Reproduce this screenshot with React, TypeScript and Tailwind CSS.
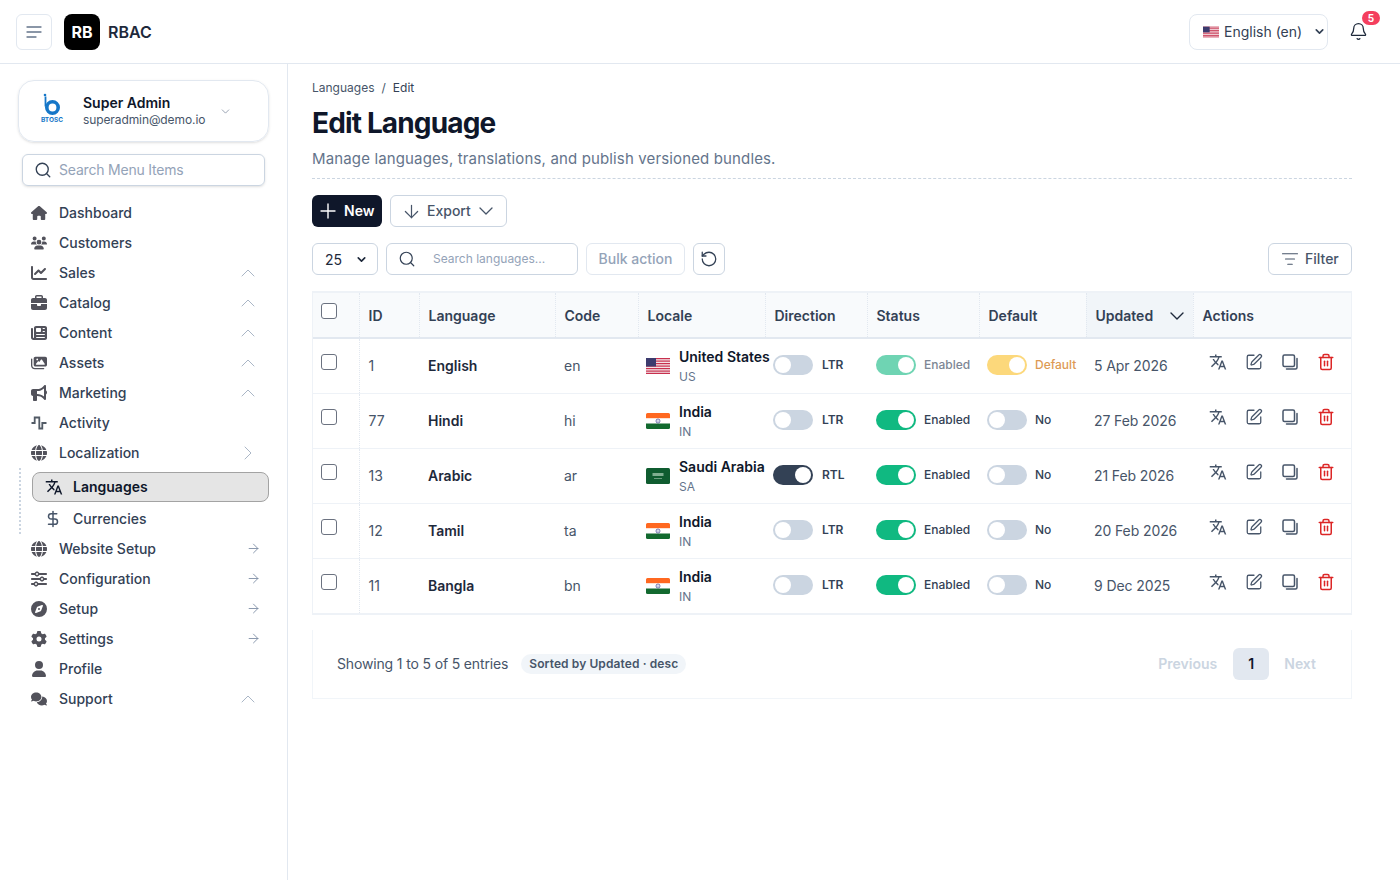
import type { ReactNode } from 'react'
import { ChevronDown, ChevronRight, ChevronUp, ArrowRight, ArrowDown, Bell, Search, Plus, RotateCcw, ListFilter, DollarSign, SquarePen, Trash2 } from 'lucide-react'
import { FaHouse, FaUsers, FaChartLine, FaBriefcase, FaNewspaper, FaImages, FaBullhorn, FaGlobe, FaSliders, FaCompass, FaGear, FaUser, FaComments } from 'react-icons/fa6'
import { MdTranslate } from 'react-icons/md'

const ActivityIcon = () => (
  <svg width="16" height="16" viewBox="0 0 16 16" fill="none" stroke="#525b66" strokeWidth="1.8">
    <path d="M0.5 8h3.2V2.5h4.6v11h3V8h4.2" />
  </svg>
)

const CopyIcon = () => (
  <svg width="18" height="18" viewBox="0 0 18 18" fill="none" stroke="#475569" strokeWidth="1.5" strokeLinecap="round" strokeLinejoin="round">
    <rect x="2" y="2" width="11.5" height="11.5" rx="1.5" />
    <path d="M16 5.5v9a1.5 1.5 0 0 1-1.5 1.5h-9" />
  </svg>
)

const UsFlag = ({ w = 24, h = 16 }: { w?: number; h?: number }) => (
  <svg width={w} height={h} viewBox="0 0 24 16" className="shrink-0">
    <rect width="24" height="16" fill="#f3e3e6" />
    {[0, 2.5, 5, 7.5, 10, 12.5, 14.8].map((y) => (
      <rect key={y} y={y} width="24" height="1.2" fill="#c8304e" />
    ))}
    <rect width="10" height="8.5" fill="#3c3b6e" />
  </svg>
)

const InFlag = () => (
  <svg width="24" height="16" viewBox="0 0 24 16" className="shrink-0">
    <path d="M0 1.5A1.5 1.5 0 0 1 1.5 0h21A1.5 1.5 0 0 1 24 1.5v3.9H0z" fill="#ff6820" />
    <rect y="5.4" width="24" height="5.2" fill="#fff" />
    <path d="M0 10.6h24v3.9a1.5 1.5 0 0 1-1.5 1.5h-21A1.5 1.5 0 0 1 0 14.5z" fill="#12692f" />
    <circle cx="12" cy="8" r="2" fill="none" stroke="#3b3f91" strokeWidth="0.7" />
    <circle cx="12" cy="8" r="0.6" fill="#3b3f91" />
  </svg>
)

const SaFlag = () => (
  <svg width="24" height="16" viewBox="0 0 24 16" className="shrink-0">
    <rect width="24" height="16" rx="1.5" fill="#0f5c30" />
    <rect x="6.5" y="5" width="11" height="3" fill="#7fae90" />
    <rect x="8" y="10" width="8" height="0.6" fill="#a9c9b5" />
  </svg>
)

const Logo = () => (
  <div className="w-[44px] flex flex-col items-center mb-1.5">
    <svg width="20" height="22" viewBox="0 0 20 22" fill="none">
      <circle cx="3" cy="2" r="1.3" fill="#1677c8" />
      <path d="M3.5 3.5v10" stroke="#1677c8" strokeWidth="1.8" />
      <circle cx="10.5" cy="14.5" r="5.7" stroke="#1677c8" strokeWidth="3.6" />
    </svg>
    <span className="text-[6.5px] leading-[6px] font-bold text-[#1677c8] mt-0.5">BTOSC</span>
  </div>
)

type NavProps = { icon: ReactNode; label: string; trail?: 'up' | 'right' | 'arrow' }

const NavItem = ({ icon, label, trail }: NavProps) => (
  <div className="h-[30px] flex items-center pl-[13px] pr-[9px]">
    <span className="w-4 h-4 flex items-center justify-center text-[#52525b] shrink-0">{icon}</span>
    <span className="ml-3 text-sm font-medium text-[#334155] flex-1">{label}</span>
    {trail === 'up' && <ChevronUp size={24} strokeWidth={0.8} className="text-[#94a3b8]" />}
    {trail === 'right' && <ChevronRight size={24} strokeWidth={0.8} className="text-[#94a3b8]" />}
    {trail === 'arrow' && (
      <span className="w-6 flex justify-end -mr-px -mt-[2px]">
        <ArrowRight size={15} strokeWidth={1.4} className="text-[#7c8ba3]" />
      </span>
    )}
  </div>
)

const Sidebar = () => (
  <aside className="w-[288px] shrink-0 border-r border-[#e2e8f0] bg-white pt-4 pl-[18px] pr-[18px]">
    <div className="h-[62px] border border-[#e2e8f0] rounded-2xl shadow-sm flex items-center pl-[11px]">
      <Logo />
      <div className="ml-[9px] flex-1">
        <div className="text-sm leading-[18px] font-semibold text-[#0f172a]">Super Admin</div>
        <div className="text-xs leading-[16px] tracking-[-0.1px] text-[#475569]">superadmin@demo.io</div>
      </div>
      <ChevronDown size={13} strokeWidth={1.2} className="text-[#64748b] mr-9" />
    </div>
    <div className="mx-1 mt-3 h-8 border border-[#cbd5e1] rounded-md flex items-center pl-[11px] shadow-sm">
      <Search size={18} strokeWidth={1.8} className="text-[#334155]" />
      <span className="ml-[7px] text-sm tracking-[-0.2px] text-[#94a3b8]">Search Menu Items</span>
    </div>
    <nav className="mt-3">
      <NavItem icon={<FaHouse size={16} />} label="Dashboard" />
      <NavItem icon={<FaUsers size={16} />} label="Customers" />
      <NavItem icon={<FaChartLine size={16} />} label="Sales" trail="up" />
      <NavItem icon={<FaBriefcase size={16} />} label="Catalog" trail="up" />
      <NavItem icon={<FaNewspaper size={16} />} label="Content" trail="up" />
      <NavItem icon={<FaImages size={16} />} label="Assets" trail="up" />
      <NavItem icon={<FaBullhorn size={16} />} label="Marketing" trail="up" />
      <NavItem icon={<ActivityIcon />} label="Activity" />
      <NavItem icon={<FaGlobe size={16} />} label="Localization" trail="right" />
      <div className="pt-1 border-l-2 border-dotted border-[#cbd5e1] ml-px pl-[11px]">
        <div className="h-[30px] flex items-center bg-[#e5e5e5] border border-[#a3a3a3] rounded-lg pl-3">
          <MdTranslate size={18} className="text-[#0f172a]" />
          <span className="ml-[10px] text-sm font-semibold text-[#0f172a]">Languages</span>
        </div>
        <div className="h-[30px] mt-0.5 flex items-center pl-3">
          <DollarSign size={18} strokeWidth={2} className="text-[#475569]" />
          <span className="ml-[11px] text-sm font-medium text-[#334155]">Currencies</span>
        </div>
      </div>
      <NavItem icon={<FaGlobe size={16} />} label="Website Setup" trail="arrow" />
      <NavItem icon={<FaSliders size={16} />} label="Configuration" trail="arrow" />
      <NavItem icon={<FaCompass size={16} />} label="Setup" trail="arrow" />
      <NavItem icon={<FaGear size={16} />} label="Settings" trail="arrow" />
      <NavItem icon={<FaUser size={16} />} label="Profile" />
      <NavItem icon={<FaComments size={16} />} label="Support" trail="up" />
    </nav>
  </aside>
)

const Toggle = ({ on, color, faded }: { on?: boolean; color?: string; faded?: boolean }) => (
  <span className={`w-10 h-5 rounded-full flex items-center px-0.5 shrink-0 ${color ?? 'bg-[#cbd5e1]'} ${on ? 'justify-end' : 'justify-start'} ${faded ? 'opacity-60' : ''}`}>
    <span className="w-4 h-4 rounded-full bg-white" />
  </span>
)

const Actions = () => (
  <div className="flex items-center pl-4 gap-[18px] mb-2">
    <MdTranslate size={18} className="text-[#475569]" />
    <SquarePen size={18} strokeWidth={1.7} className="text-[#475569]" />
    <CopyIcon />
    <Trash2 size={18} strokeWidth={2} className="text-[#dc2626]" />
  </div>
)

const Checkbox = () => <input type="checkbox" className="appearance-none block w-4 h-4 rounded-[3px] border border-[#6b7280] bg-white mb-2" />

type Row = { id: number; name: string; code: string; country: string; cc: string; flag: ReactNode; dir: string; date: string; isDefault?: boolean }

const rows: Row[] = [
  { id: 1, name: 'English', code: 'en', country: 'United States', cc: 'US', flag: <UsFlag />, dir: 'LTR', date: '5 Apr 2026', isDefault: true },
  { id: 77, name: 'Hindi', code: 'hi', country: 'India', cc: 'IN', flag: <InFlag />, dir: 'LTR', date: '27 Feb 2026' },
  { id: 13, name: 'Arabic', code: 'ar', country: 'Saudi Arabia', cc: 'SA', flag: <SaFlag />, dir: 'RTL', date: '21 Feb 2026' },
  { id: 12, name: 'Tamil', code: 'ta', country: 'India', cc: 'IN', flag: <InFlag />, dir: 'LTR', date: '20 Feb 2026' },
  { id: 11, name: 'Bangla', code: 'bn', country: 'India', cc: 'IN', flag: <InFlag />, dir: 'LTR', date: '9 Dec 2025' },
]

const thClass = 'pl-[9px] pr-2 pt-0.5 text-left text-sm font-semibold text-[#334155] border-r border-dotted border-[#e2e8f0]'

const LanguageTable = () => (
  <div className="mt-4 border border-t-2 border-[#eef2f7]">
    <table className="w-full table-fixed border-collapse">
      <colgroup>
        <col className="w-[46px]" />
        <col className="w-[60px]" />
        <col className="w-[136px]" />
        <col className="w-[83px]" />
        <col className="w-[127px]" />
        <col className="w-[102px]" />
        <col className="w-[112px]" />
        <col className="w-[107px]" />
        <col className="w-[107px]" />
        <col />
      </colgroup>
      <thead>
        <tr className="h-[45px] bg-[#f8fafc] border-b-2 border-[#e2e8f0]">
          <th className="pl-2 border-r border-dotted border-[#e2e8f0]"><Checkbox /></th>
          <th className={thClass}>ID</th>
          <th className={thClass}>Language</th>
          <th className={thClass}>Code</th>
          <th className={thClass}>Locale</th>
          <th className={thClass}>Direction</th>
          <th className={thClass}>Status</th>
          <th className={thClass}>Default</th>
          <th className={`${thClass} bg-[#f1f5f9] text-[#0f172a]`}>
            <div className="flex items-center justify-between">
              Updated
              <ChevronDown size={24} strokeWidth={1.4} className="text-[#1e293b] -mr-1" />
            </div>
          </th>
          <th className="pl-[9px] pr-2 pt-0.5 text-left text-sm font-semibold text-[#334155]">Actions</th>
        </tr>
      </thead>
      <tbody>
        {rows.map((r) => (
          <tr key={r.id} className="h-[55px] border-b border-[#eef2f7]">
            <td className="pl-2 border-r border-dotted border-[#e2e8f0]"><Checkbox /></td>
            <td className="pl-[9px] pr-2 text-sm text-[#475569]">{r.id}</td>
            <td className="pl-[9px] pr-2 text-sm font-semibold text-[#1e293b]">{r.name}</td>
            <td className="pl-[9px] pr-2 text-sm text-[#475569]">{r.code}</td>
            <td className="pl-2 pr-0">
              <div className="flex items-center whitespace-nowrap">
                {r.flag}
                <div className="ml-[9px] pt-px">
                  <div className="text-sm leading-5 font-semibold text-[#0f172a]">{r.country}</div>
                  <div className="text-xs leading-4 mt-0.5 text-[#64748b]">{r.cc}</div>
                </div>
              </div>
            </td>
            <td className="pl-2">
              <div className="flex items-center gap-[9px] mb-0.5">
                <Toggle on={r.dir === 'RTL'} color={r.dir === 'RTL' ? 'bg-[#334155]' : undefined} />
                <span className="text-xs font-semibold text-[#334155]">{r.dir}</span>
              </div>
            </td>
            <td className="pl-[9px]">
              <div className="flex items-center gap-2 mb-0.5">
                <Toggle on color="bg-[#10b981]" faded={r.isDefault} />
                <span className={`text-xs font-medium ${r.isDefault ? 'text-[#7d8694]' : 'text-[#334155]'}`}>Enabled</span>
              </div>
            </td>
            <td className="pl-2">
              <div className="flex items-center gap-2 mb-0.5">
                {r.isDefault ? <Toggle on color="bg-[#fbbf24]" faded /> : <Toggle />}
                <span className={`text-xs font-medium ${r.isDefault ? 'text-[#dd9a54]' : 'text-[#334155]'}`}>{r.isDefault ? 'Default' : 'No'}</span>
              </div>
            </td>
            <td className="px-2 text-sm tracking-[-0.1px] text-[#475569] whitespace-nowrap">{r.date}</td>
            <td><Actions /></td>
          </tr>
        ))}
      </tbody>
    </table>
  </div>
)

const App = () => (
  <div className="h-screen flex flex-col bg-white font-['Inter',sans-serif] overflow-hidden">
    <header className="h-16 shrink-0 border-b border-[#e2e8f0] flex items-center pl-4 pr-[32px]">
      <button className="w-9 h-9 border border-[#e2e8f0] rounded-md flex items-center justify-center">
        <svg width="16" height="14" viewBox="0 0 16 14" fill="none" stroke="#64748b" strokeWidth="1.3" strokeLinecap="round">
          <path d="M1 2h14M1 7h14M1 12h9" />
        </svg>
      </button>
      <div className="ml-3 w-9 h-9 rounded-lg bg-black text-white text-base font-bold flex items-center justify-center">RB</div>
      <span className="ml-2 text-base font-semibold text-[#1e293b]">RBAC</span>
      <div className="ml-auto w-[139px] h-9 border border-[#e2e8f0] rounded-lg flex items-center pl-[13px]">
        <UsFlag w={16} h={12} />
        <span className="ml-[5px] text-sm text-[#334155]">English (en)</span>
        <ChevronDown size={13} strokeWidth={3} className="text-[#334155] ml-[11px]" />
      </div>
      <div className="relative ml-[21px]">
        <Bell size={19} strokeWidth={1.6} className="text-[#1e293b]" />
        <span className="absolute -top-[11px] -right-[12px] w-[18px] h-[14px] rounded-full bg-[#f43f5e] text-white text-[10px] font-bold flex items-center justify-center">5</span>
      </div>
    </header>
    <div className="flex flex-1 min-h-0">
      <Sidebar />
      <main className="flex-1 pl-6 pr-12 pt-4">
        <div className="flex items-center text-xs leading-4 text-[#475569]">
          Languages<span className="mx-[7px]">/</span><span className="text-[#334155]">Edit</span>
        </div>
        <h1 className="mt-[9px] text-[28px] leading-[36px] font-bold tracking-[-0.85px] text-[#0f172a]">Edit Language</h1>
        <p className="mt-1.5 pb-[7px] text-[15px] leading-6 tracking-[0.14px] text-[#64748b] border-b border-dashed border-[#cbd5e1]">Manage languages, translations, and publish versioned bundles.</p>
        <div className="mt-4 flex items-center gap-2">
          <button className="h-8 w-[70px] rounded-md bg-[#0f172a] text-white text-sm font-semibold flex items-center pl-[4px] gap-[4px]">
            <Plus size={24} strokeWidth={1.4} />New
          </button>
          <button className="h-8 w-[117px] rounded-md border border-[#cbd5e1] text-sm font-medium text-[#475569] flex items-center pl-[10px] gap-[5px]">
            <ArrowDown size={21} strokeWidth={1.4} />Export<ChevronDown size={24} strokeWidth={1.3} className="-ml-0.5" />
          </button>
        </div>
        <div className="mt-4 flex items-center gap-2">
          <div className="h-8 w-[66px] rounded-md border border-[#cbd5e1] flex items-center pl-3 text-sm text-[#1e293b]">
            <span className="pt-0.5">25</span>
            <ChevronDown size={13} strokeWidth={3} className="ml-[13px]" />
          </div>
          <div className="h-8 w-[192px] rounded-md border border-[#cbd5e1] flex items-center pl-[11px]">
            <Search size={18} strokeWidth={1.6} className="text-[#334155]" />
            <span className="ml-[17px] text-xs text-[#94a3b8]">Search languages...</span>
          </div>
          <button className="h-8 w-[99px] rounded-md border border-[#e2e8f0] text-sm font-medium text-[#94a3b8]">Bulk action</button>
          <button className="h-8 w-8 rounded-md border border-[#cbd5e1] flex items-center justify-center">
            <RotateCcw size={18} strokeWidth={1.7} className="text-[#334155]" />
          </button>
          <button className="ml-auto h-8 w-[84px] rounded-md border border-[#cbd5e1] text-sm font-medium text-[#475569] flex items-center pl-3 gap-[6px]">
            <ListFilter size={18} strokeWidth={1.5} />Filter
          </button>
        </div>
        <LanguageTable />
        <div className="mt-[15px] h-[69px] border border-t-0 border-[#f1f5f9] flex items-center pl-6 pr-[35px]">
          <span className="text-sm tracking-[-0.15px] text-[#475569]">Showing 1 to 5 of 5 entries</span>
          <span className="ml-[13px] h-5 px-2 rounded-full bg-[#f1f5f9] text-xs tracking-[0.1px] font-semibold text-[#475569] flex items-center">Sorted by Updated · desc</span>
          <span className="ml-auto text-sm font-semibold text-[#cbd5e1]">Previous</span>
          <span className="ml-4 w-9 h-8 rounded-md bg-[#e2e8f0] text-sm font-semibold text-[#0f172a] flex items-center justify-center">1</span>
          <span className="ml-[15px] text-sm font-semibold text-[#cbd5e1]">Next</span>
        </div>
      </main>
    </div>
  </div>
)

export default App
